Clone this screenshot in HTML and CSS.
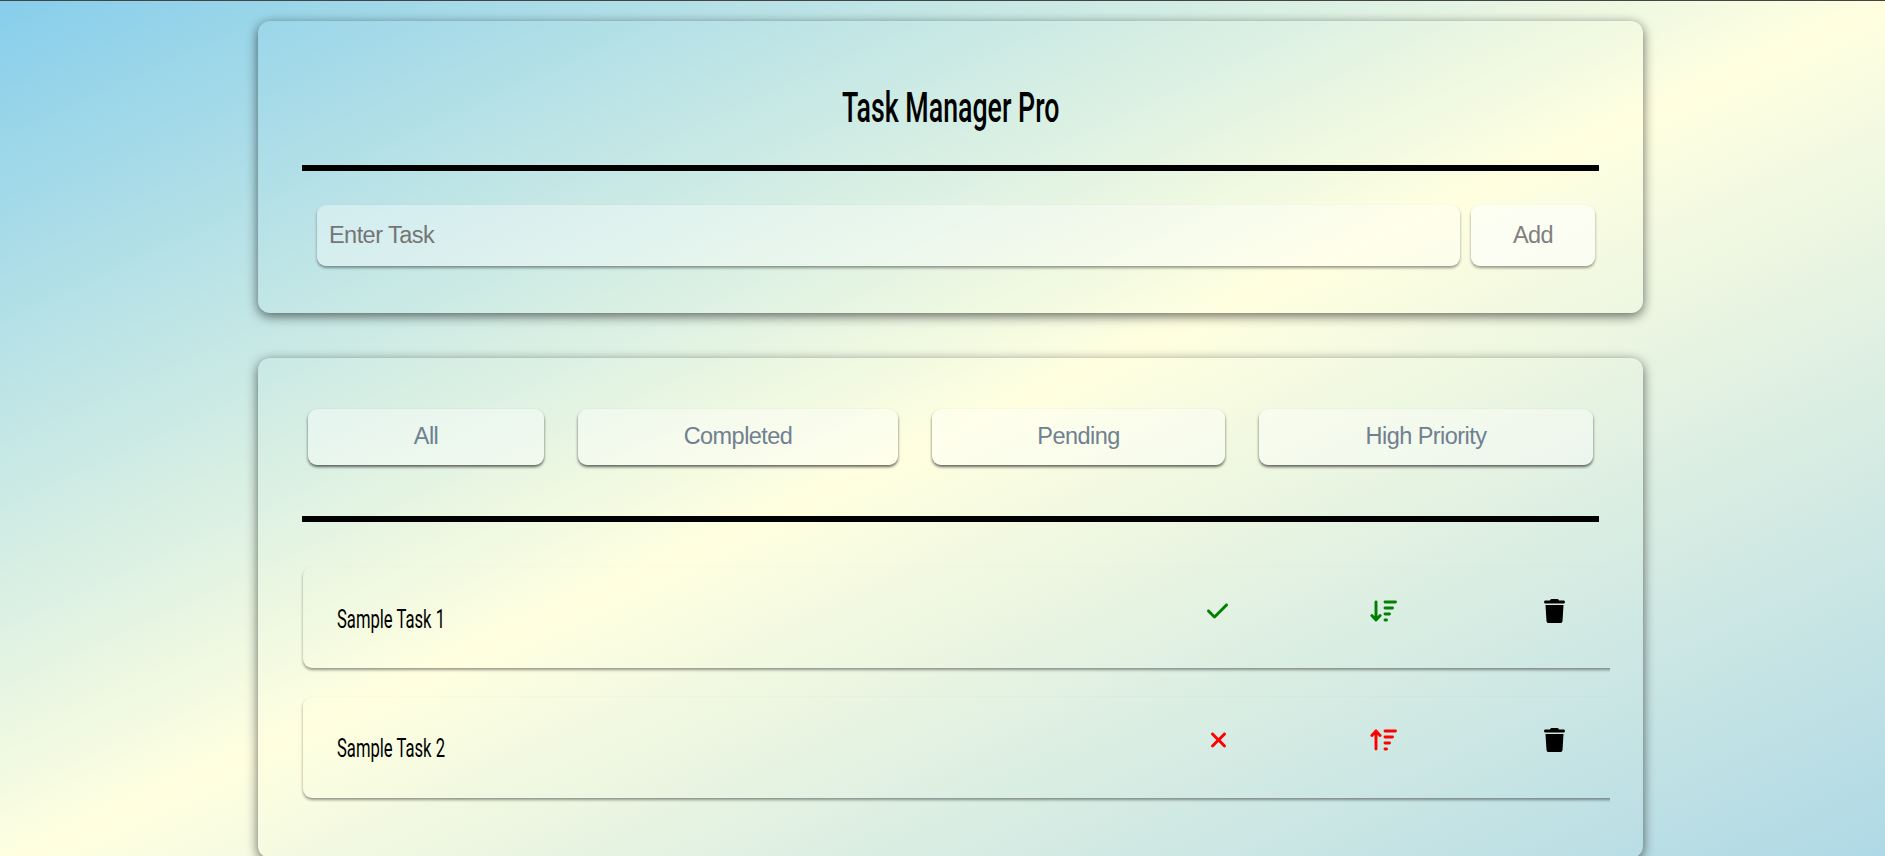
FILE: index.html
```html
<!DOCTYPE html>
<html lang="en">
<head>
<meta charset="utf-8">
<title>Task Manager Pro</title>
<link rel="stylesheet" href="styles.css">
</head>
<body>
<svg class="sprite" aria-hidden="true">
  <symbol id="check" viewBox="0 0 448 512"><path d="M438.6 105.4c12.5 12.5 12.5 32.8 0 45.3l-256 256c-12.5 12.5-32.8 12.5-45.3 0l-128-128c-12.5-12.5-12.5-32.8 0-45.3s32.8-12.5 45.3 0L160 338.7 393.4 105.4c12.5-12.5 32.8-12.5 45.3 0z"/></symbol>
  <symbol id="xmark" viewBox="0 0 320 512"><path d="M310.6 150.6c12.5-12.5 12.5-32.8 0-45.3s-32.8-12.5-45.3 0L160 210.7 54.6 105.4c-12.5-12.5-32.8-12.5-45.3 0s-12.5 32.8 0 45.3L114.7 256 9.4 361.4c-12.5 12.5-12.5 32.8 0 45.3s32.8 12.5 45.3 0L160 301.3 265.4 406.6c12.5 12.5 32.8 12.5 45.3 0s12.5-32.8 0-45.3L205.3 256 310.6 150.6z"/></symbol>
  <symbol id="sort-down" viewBox="0 0 576 512"><path class="line" d="M128 64V448M40 352l88 96 88-96M320 64h224M320 192h160M320 320h96M320 448h32"/></symbol>
  <symbol id="sort-up" viewBox="0 0 576 512"><path class="line" d="M128 448V64M40 160l88-96 88 96M320 64h224M320 192h160M320 320h96M320 448h32"/></symbol>
  <symbol id="trash" viewBox="0 0 448 512"><path d="M135.2 17.7L128 32H32C14.3 32 0 46.3 0 64S14.3 96 32 96H416c17.7 0 32-14.3 32-32s-14.3-32-32-32H320l-7.2-14.3C307.4 6.8 296.3 0 284.2 0H163.8c-12.1 0-23.2 6.8-28.6 17.7zM416 128H32L53.2 467c1.6 25.3 22.6 45 47.9 45H346.9c25.3 0 46.3-19.7 47.9-45L416 128z"/></symbol>
</svg>
<main class="page">
  <section class="panel entry">
    <h1 class="title"><span class="title-text">Task Manager Pro</span></h1>
    <hr class="rule">
    <form class="form">
      <input class="field" type="text" placeholder="Enter Task">
      <button class="add" type="button">Add</button>
    </form>
  </section>
  <section class="panel tasks">
    <nav class="filters">
      <button class="filter all">All</button>
      <button class="filter completed">Completed</button>
      <button class="filter pending">Pending</button>
      <button class="filter high">High Priority</button>
    </nav>
    <hr class="rule">
    <ul class="list">
      <li class="task">
        <span class="name"><span class="name-text">Sample Task 1</span></span>
        <svg class="icon status done"><use href="#check"/></svg>
        <svg class="icon sort done"><use href="#sort-down"/></svg>
        <svg class="icon trash"><use href="#trash"/></svg>
      </li>
      <li class="task">
        <span class="name"><span class="name-text">Sample Task 2</span></span>
        <svg class="icon status open"><use href="#xmark"/></svg>
        <svg class="icon sort open"><use href="#sort-up"/></svg>
        <svg class="icon trash"><use href="#trash"/></svg>
      </li>
    </ul>
  </section>
</main>
</body>
</html>
```
FILE: styles.css
```css
* { box-sizing: border-box; }
html { height: 100%; overflow: hidden; }
body {
  margin: 0;
  height: 856px;
  overflow: hidden;
  border-top: 1px solid #444;
  background: linear-gradient(155.4deg, skyblue, lightyellow, lightblue) 0 0 / 100% 874px no-repeat;
  font-family: "Liberation Sans", Arial, sans-serif;
}
.sprite { display: none; }
.line { fill: none; stroke: currentColor; stroke-width: 62; stroke-linecap: round; stroke-linejoin: round; }
.page {
  display: flex;
  flex-direction: column;
  gap: 45px;
  width: 1385px;
  margin: 20px 0 0 258px;
}
.panel {
  padding: 0 44px;
  border-radius: 12px;
  box-shadow: 0 3px 12px rgba(0, 0, 0, .6);
}
.entry { height: 292px; padding-top: 52px; }
.tasks { height: 500px; padding-top: 51px; }
.title {
  display: flex;
  justify-content: center;
  height: 92px;
  margin: 0;
  font: 500 42px/70px Roboto, sans-serif;
}
.title-text { transform: scaleX(.637); white-space: nowrap; }
.rule { height: 6px; margin: 0; border: 0; background: #000; }
.form { display: flex; gap: 11px; margin: 34px 4px 0 15px; }
.field, .add, .filter {
  border: 0;
  border-radius: 9px;
  background: rgba(255, 255, 255, .4);
  font: 23.5px "Liberation Sans", Arial, sans-serif;
  letter-spacing: -.55px;
}
.field, .add { height: 61px; box-shadow: 0 2px 3px rgba(0, 0, 0, .4); }
.field { flex: 1; min-width: 0; padding: 0 12px 1px; background: rgba(255, 255, 255, .36); }
.field::placeholder { color: #757575; }
.add { width: 124px; padding: 0 0 1px; background: rgba(255, 255, 255, .6); color: gray; }
.filters { display: flex; gap: 34px; margin: 0 0 51px 6px; }
.filter {
  height: 56px;
  padding: 0 0 2px;
  color: slategray;
  box-shadow: 0 2px 3px rgba(0, 0, 0, .6);
}
.all { width: 236px; }
.completed { width: 320px; }
.pending { width: 293px; }
.high { width: 334px; }
.list {
  display: flex;
  flex-direction: column;
  gap: 29px;
  width: 1318px;
  height: 300px;
  margin: 25px 0 0 -10px;
  padding: 20px 0 0 11px;
  overflow: hidden;
  list-style: none;
}
.task {
  display: grid;
  grid-template-columns: 33px 853px 184px 160px 100px;
  flex: none;
  width: 1330px;
  height: 101px;
  padding-top: 32.4px;
  border-radius: 9px;
  box-shadow: 0 2px 3px rgba(0, 0, 0, .4);
}
.task + .task { padding-top: 31.4px; }
.name { grid-column: 2; padding-left: .5px; font: 400 25px/41px Roboto, sans-serif; }
.name-text { display: inline-block; transform: scaleX(.665); transform-origin: left; white-space: nowrap; }
.icon { height: 24px; }
.status { width: 21px; margin-left: 18px; }
.status.open { width: 15px; margin-left: 22px; }
.sort { width: 27px; margin-left: -3px; }
.trash { width: 21px; margin-left: 11px; }
.done { color: green; fill: green; }
.open { color: red; fill: red; }
```
